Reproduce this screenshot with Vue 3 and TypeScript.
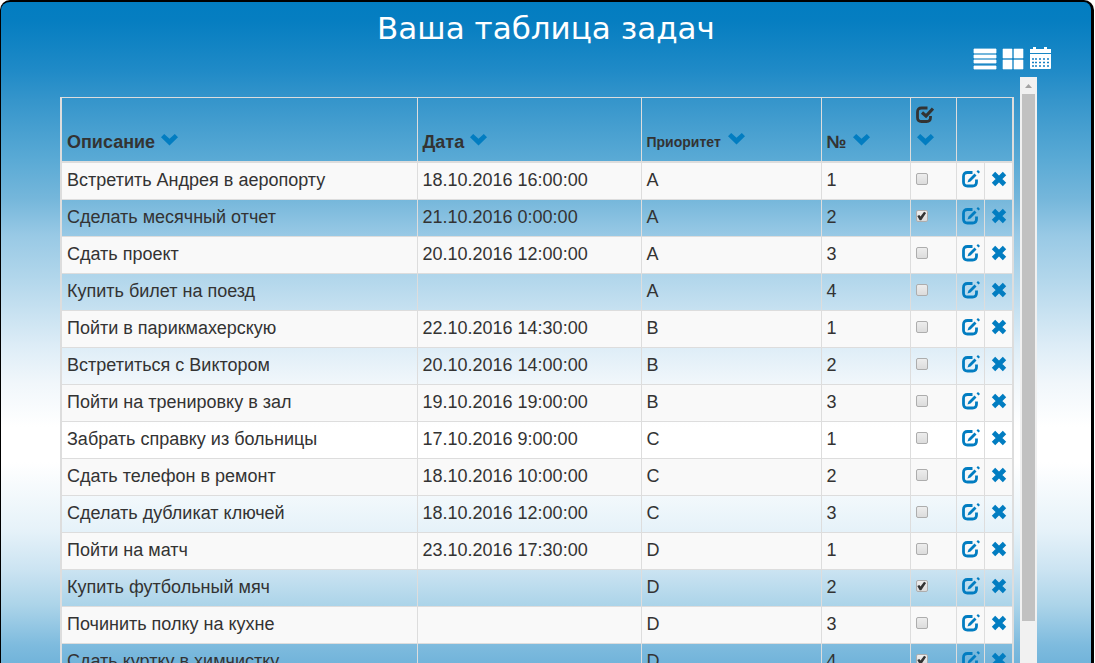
<script setup lang="ts">
import { ref } from 'vue'

interface Task {
  title: string
  date: string
  priority: string
  order: number
  done: boolean
}

const make = (title: string, date: string, priority: string, order: number, done = false): Task => ({
  title, date, priority, order, done,
})

const tasks = ref<Task[]>([
  make('Встретить Андрея в аеропорту', '18.10.2016 16:00:00', 'A', 1),
  make('Сделать месячный отчет', '21.10.2016 0:00:00', 'A', 2, true),
  make('Сдать проект', '20.10.2016 12:00:00', 'A', 3),
  make('Купить билет на поезд', '', 'A', 4),
  make('Пойти в парикмахерскую', '22.10.2016 14:30:00', 'B', 1),
  make('Встретиться с Виктором', '20.10.2016 14:00:00', 'B', 2),
  make('Пойти на тренировку в зал', '19.10.2016 19:00:00', 'B', 3),
  make('Забрать справку из больницы', '17.10.2016 9:00:00', 'C', 1),
  make('Сдать телефон в ремонт', '18.10.2016 10:00:00', 'C', 2),
  make('Сделать дубликат ключей', '18.10.2016 12:00:00', 'C', 3),
  make('Пойти на матч', '23.10.2016 17:30:00', 'D', 1),
  make('Купить футбольный мяч', '', 'D', 2, true),
  make('Починить полку на кухне', '', 'D', 3),
  make('Сдать куртку в химчистку', '', 'D', 4, true),
])

type SortKey = 'title' | 'date' | 'priority' | 'order' | 'done'

function sortBy(key: SortKey) {
  tasks.value.sort((a, b) => (a[key] > b[key] ? 1 : a[key] < b[key] ? -1 : 0))
}

function remove(task: Task) {
  tasks.value = tasks.value.filter((t) => t !== task)
}

const chevron = 'M0 3.200 3.200 0 8.500 4.800 13.800 0 17 3.200 8.500 11.600Z'
</script>

<template>
  <main class="panel">
    <h1 class="title">Ваша таблица задач</h1>
    <nav class="views">
      <button type="button" class="icon-button" aria-label="Список">
        <svg width="24" height="22" viewBox="0 0 24 22">
          <path d="M1 1h22v4H1zM1 7h22v3H1zM1 12h22v3H1zM1 18h22v3H1z" fill="#fff" stroke="#fff" stroke-width=".8" />
        </svg>
      </button>
      <button type="button" class="icon-button" aria-label="Плитка">
        <svg width="22" height="22" viewBox="0 0 22 22">
          <path d="M1 1h9v9H1zM12 1h9v9h-9zM1 12h9v9H1zM12 12h9v9h-9z" fill="#fff" stroke="#fff" stroke-width=".6" stroke-linejoin="round" />
        </svg>
      </button>
      <button type="button" class="icon-button" aria-label="Календарь">
        <svg width="22" height="22" viewBox="0 0 22 22">
          <path d="M1 1h3V-1h3v2h8V-1h3v2h4v4H1zM1 6h21v14q0 1-1 1H2q-1 0-1-1z" fill="#fff" overflow="visible" />
          <path d="M3 11h2M6 11h2M10 11h2M14 11h2M18 11h2M3 14.500h2M6 14.500h2M10 14.500h2M14 14.500h2M18 14.500h2M3 18h2M6 18h2M10 18h2M14 18h2M18 18h2" stroke="#1580c4" stroke-width="1.600" />
        </svg>
      </button>
    </nav>

    <section class="content">
      <table class="tasks">
        <colgroup>
          <col class="c-title"><col class="c-date"><col class="c-priority"><col class="c-order">
          <col class="c-done"><col class="c-edit"><col class="c-remove">
        </colgroup>
        <thead>
          <tr>
            <th scope="col">Описание
              <button type="button" class="icon-button" aria-label="Сортировать по описанию" @click="sortBy('title')">
                <svg class="chevron" width="17" height="12" viewBox="0 0 17 12"><path :d="chevron" /></svg>
              </button>
            </th>
            <th scope="col">Дата
              <button type="button" class="icon-button" aria-label="Сортировать по дате" @click="sortBy('date')">
                <svg class="chevron" width="17" height="12" viewBox="0 0 17 12"><path :d="chevron" /></svg>
              </button>
            </th>
            <th scope="col"><span class="small">Приоритет</span>
              <button type="button" class="icon-button" aria-label="Сортировать по приоритету" @click="sortBy('priority')">
                <svg class="chevron" width="17" height="12" viewBox="0 0 17 12"><path :d="chevron" /></svg>
              </button>
            </th>
            <th scope="col">№
              <button type="button" class="icon-button" aria-label="Сортировать по номеру" @click="sortBy('order')">
                <svg class="chevron" width="17" height="12" viewBox="0 0 17 12"><path :d="chevron" /></svg>
              </button>
            </th>
            <th scope="col" aria-label="Выполнено">
              <svg class="check" width="18" height="17" viewBox="0 0 18 17">
                <path d="M11.500 2H5.500Q1.500 2 1.500 6V11.500Q1.500 15.500 5.500 15.500H10.500Q14.500 15.500 14.500 11.500V10" fill="none" stroke="#333" stroke-width="2.800" />
                <path d="M6 6.500 10 10 17 2.500" fill="none" stroke="#333" stroke-width="3.200" />
              </svg>
              <button type="button" class="icon-button" aria-label="Сортировать по выполнению" @click="sortBy('done')">
                <svg class="chevron" width="17" height="12" viewBox="0 0 17 12"><path :d="chevron" /></svg>
              </button>
            </th>
            <th colspan="2"></th>
          </tr>
        </thead>
        <tbody>
          <tr v-for="task in tasks" :key="task.title">
            <td>{{ task.title }}</td>
            <td>{{ task.date }}</td>
            <td>{{ task.priority }}</td>
            <td>{{ task.order }}</td>
            <td class="done"><input v-model="task.done" type="checkbox" :aria-label="task.title"></td>
            <td class="action">
              <button type="button" class="icon-button" aria-label="Изменить">
                <svg width="18" height="18" viewBox="0 0 18 18">
                  <path d="M10.500 2.500H5.500Q1.500 2.500 1.500 6.500V12Q1.500 16 5.500 16H10.500Q14.500 16 14.500 12V9.500" fill="none" stroke="#027dc1" stroke-width="2.800" />
                  <path d="M5.500 12.500 6.500 9.500 12.500 3.500 14.500 5.500 8.500 11.500ZM14.500 1.500 16 0 18 2 16.500 3.500Z" fill="#027dc1" />
                </svg>
              </button>
            </td>
            <td class="action">
              <button type="button" class="icon-button" aria-label="Удалить" @click="remove(task)">
                <svg width="18" height="18" viewBox="0 0 18 18">
                  <path d="M3.500 3.500 14.500 14.500M14.500 3.500 3.500 14.500" stroke="#027dc1" stroke-width="4.800" />
                </svg>
              </button>
            </td>
          </tr>
        </tbody>
      </table>
      <div class="scrollbar" aria-hidden="true">
        <svg class="arrow" width="17" height="17" viewBox="0 0 17 17"><path d="M5 11 8.500 7 12 11Z" fill="#a3a3a3" /></svg>
        <div class="thumb"></div>
      </div>
    </section>
  </main>
</template>

<style>
html, body, #app {
  height: 100%;
}
body {
  margin: 0;
  overflow: hidden;
  background: #fff;
}
</style>

<style scoped>
.panel {
  box-sizing: border-box;
  height: 100vh;
  margin-right: 1px;
  display: flex;
  flex-direction: column;
  overflow: hidden;
  border: solid #000;
  border-width: 2px 3px 0 1px;
  border-radius: 10px 10px 0 0;
  background: linear-gradient(#027dc1 0, #067ec1 20px, #1f8ac7 68px, #3595cb 98px, #5aaad5 158px, #76b7db 198px, #98c9e5 233px, #b1d6eb 275px, #deedf7 345px, #f1f7fb 382px, #fff 425px, #fff 460px, #e6f2f9 528px, #cce4f2 567px, #acd4e9 603px, #7ebbde 643px, #72b4da 661px);
  color: #333;
  font: 18px/26px "Liberation Sans", Arial, sans-serif;
}
.title {
  margin: 6px 0 0;
  color: #fff;
  font: 31px/40px "DejaVu Sans", Verdana, sans-serif;
  text-align: center;
}
.views {
  display: flex;
  justify-content: flex-end;
  gap: 5px;
  height: 29px;
  margin-right: 40px;
}
.icon-button {
  padding: 0;
  border: 0;
  background: none;
  font: inherit;
  line-height: 0;
  cursor: pointer;
}
.views .icon-button {
  align-self: flex-start;
}
.views svg {
  overflow: visible;
}
.content {
  flex: 1;
  min-height: 0;
  display: flex;
  align-items: flex-start;
  gap: 6px;
  margin: 0 54px 0 59px;
}
.tasks {
  flex: 1;
  margin-top: 20px;
  table-layout: fixed;
  border-collapse: collapse;
  border: 1px solid #ddd;
  border-width: 1px 2px 2px;
}
.c-date { width: 224px; }
.c-priority { width: 180px; }
.c-order { width: 89px; }
.c-done { width: 46px; }
.c-edit { width: 28px; }
.c-remove { width: 29px; }
th,
td {
  box-sizing: border-box;
  height: 37px;
  padding: 4px 5px 6px;
  border: 1px solid #ddd;
  text-align: left;
  white-space: nowrap;
}
th {
  height: 64px;
  vertical-align: bottom;
  white-space: normal;
  border-bottom-width: 2px;
}
tbody tr:nth-child(odd) {
  background: #f9f9f9;
}
.small {
  margin-right: 6px;
  font-size: 14px;
}
.chevron {
  display: inline-block;
  margin: 0 0 2px 1px;
  fill: #027dc1;
}
.check {
  display: block;
  margin-bottom: 6px;
}
td.done {
  padding: 0 5px 3px;
  line-height: 0;
}
td.action {
  padding: 0 4px 3px 5px;
  line-height: 0;
}
.done input {
  appearance: none;
  display: inline-grid;
  place-content: center;
  width: 12px;
  height: 12px;
  margin: 0;
  border: 1px solid #adadad;
  border-radius: 2px;
  background: linear-gradient(#ededed, #dcdcdc);
}
.done input:checked::after {
  content: "";
  width: 10px;
  height: 10px;
  background: #333;
  clip-path: polygon(8% 50%, 28% 40%, 40% 56%, 76% 8%, 96% 20%, 48% 92%, 32% 92%);
}
.scrollbar {
  width: 17px;
  align-self: stretch;
  background: #f1f1f1;
}
.arrow {
  display: block;
}
.thumb {
  width: 13px;
  height: 90%;
  margin: 0 2px;
  background: #c1c1c1;
}
</style>
